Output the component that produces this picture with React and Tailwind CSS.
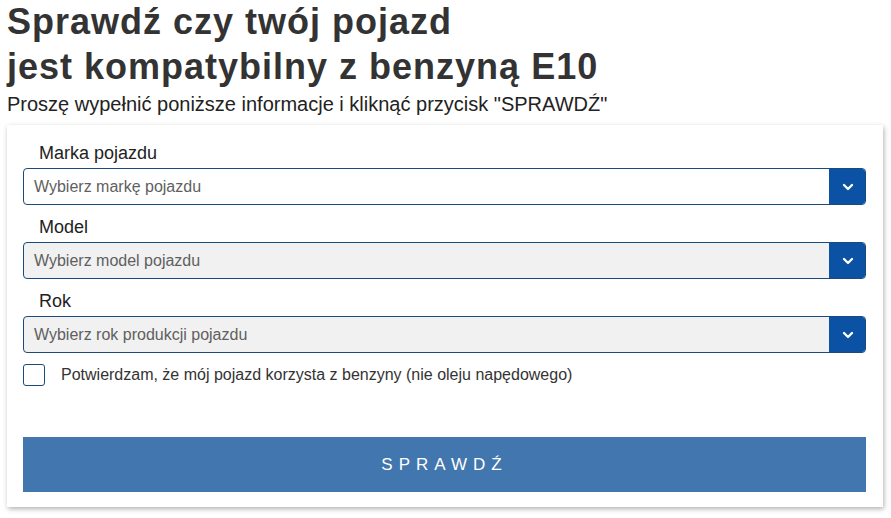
import { ChevronDown } from "lucide-react";

const fields = [
  { label: "Marka pojazdu", placeholder: "Wybierz markę pojazdu", disabled: false },
  { label: "Model", placeholder: "Wybierz model pojazdu", disabled: true },
  { label: "Rok", placeholder: "Wybierz rok produkcji pojazdu", disabled: true },
];

const SelectField = ({ label, placeholder, disabled }) => (
  <div className="flex flex-col">
    <label className="pl-4 text-[18px] leading-[22px] text-[#222] h-[22px]">{label}</label>
    <div
      className={`mt-[4px] flex h-[37px] rounded-[4px] border border-[#1d4a7c] overflow-hidden ${
        disabled ? "bg-[#f1f1f1]" : "bg-white"
      }`}>
      <div className="flex-1 flex items-center pl-[10px] text-[16px] text-[#5f5f5f]">{placeholder}</div>
      <div className="w-[37px] -my-px -mr-px flex items-center justify-center bg-[#0b52a4] rounded-r-[4px]">
        <ChevronDown className="h-4 w-4 text-white" strokeWidth={3.5} />
      </div>
    </div>
  </div>
);

export default function App() {
  return (
    <div className="bg-white min-h-[518px] w-[891px] pl-[7px] pr-[8px] text-[#333]" style={{ fontFamily: '"Liberation Sans", Arial, sans-serif' }}>
      <h1 className="text-[36px] leading-[45px] font-bold tracking-[1px] text-[#333] -mt-[1px]">
        Sprawdź czy twój pojazd
        <br />
        jest kompatybilny z benzyną E10
      </h1>
      <p className="mt-[2px] text-[20px] leading-[26px] text-[#222]">
        Proszę wypełnić poniższe informacje i kliknąć przycisk "SPRAWDŹ"
      </p>

      <div className="mt-[8px] bg-white shadow-[1px_2px_5px_rgba(0,0,0,0.3)] pl-4 pr-[17px] pt-[17px] pb-[15px]">
        <div className="flex flex-col gap-[11px]">
          {fields.map((f) => (
            <SelectField key={f.label} {...f} />
          ))}
        </div>

        <label className="mt-[11px] h-[22px] flex items-center gap-[16px]">
          <span className="h-[22px] w-[22px] rounded-[3px] border border-[#1d4a7c] bg-white" />
          <span className="text-[16px] text-[#333]">Potwierdzam, że mój pojazd korzysta z benzyny (nie oleju napędowego)</span>
        </label>

        <button className="mt-[51px] w-full h-[55px] bg-[#4176ae] text-white text-[17px] tracking-[6px] flex items-center justify-center">
          SPRAWDŹ
        </button>
      </div>
    </div>
  );
}
